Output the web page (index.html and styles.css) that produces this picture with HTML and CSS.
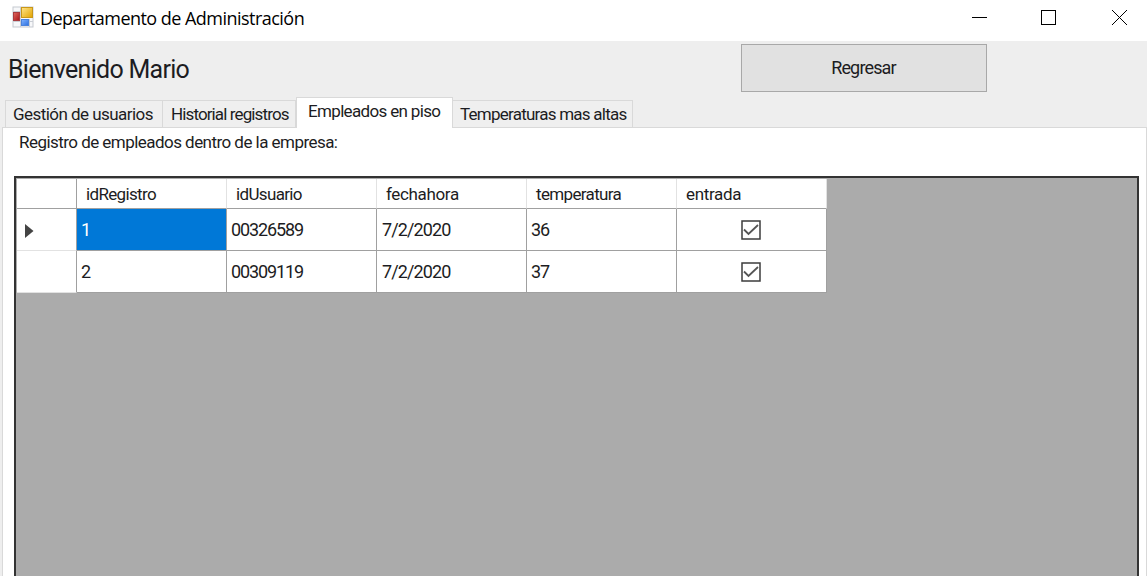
FILE: index.html
```html
<!DOCTYPE html>
<html lang="es">
<head>
<meta charset="utf-8">
<title>Departamento de Administración</title>
<link rel="stylesheet" href="styles.css">
</head>
<body>
<div class="window">
  <header class="titlebar">
    <svg class="app-icon" width="22" height="22" viewBox="0 0 22 22">
      <defs>
        <linearGradient id="gold" x1="0" y1="0" x2="1" y2="1"><stop offset="0" stop-color="#ffe58a"/><stop offset="1" stop-color="#e2a300"/></linearGradient>
        <linearGradient id="red" x1="0" y1="0" x2="1" y2="1"><stop offset="0" stop-color="#e06a60"/><stop offset="1" stop-color="#a8151a"/></linearGradient>
        <linearGradient id="blue" x1="0" y1="0" x2="1" y2="1"><stop offset="0" stop-color="#82b4ff"/><stop offset="1" stop-color="#2b6fe0"/></linearGradient>
      </defs>
      <rect x="1" y="1" width="20" height="20" fill="#f7f8fa" stroke="#c5c9d0"/>
      <path d="M8.500 1v20M1 5.500h8M1 15.500h20M17.500 13v8" stroke="#c9cdd4" fill="none"/>
      <rect x="9.500" y="1.500" width="11" height="10" fill="url(#gold)" stroke="#c99718"/>
      <rect x="1.500" y="6.500" width="6" height="8" fill="url(#red)" stroke="#a83c40"/>
      <rect x="9.500" y="13.500" width="7" height="6" fill="url(#blue)" stroke="#4b83dc"/>
    </svg>
    <span class="title">Departamento de Administración</span>
    <svg class="controls" width="170" height="41" viewBox="0 0 170 41" fill="none" stroke="#000" shape-rendering="crispEdges">
      <path d="M-5 17.500h15"/>
      <rect x="64.500" y="10.500" width="14" height="14"/>
      <path d="M135 10l15 15M150 10l-15 15"/>
    </svg>
  </header>
  <div class="top">
    <h1 class="welcome">Bienvenido Mario</h1>
    <button class="back"><span>Regresar</span></button>
  </div>
  <nav class="tabs">
    <div class="tab t1">Gestión de usuarios</div>
    <div class="tab t2">Historial registros</div>
    <div class="tab t3 active">Empleados en piso</div>
    <div class="tab t4">Temperaturas mas altas</div>
  </nav>
  <main class="page">
    <p class="caption">Registro de empleados dentro de la empresa:</p>
    <section class="viewer">
      <div class="grid">
        <div class="rh"></div><div class="th">idRegistro</div><div class="th">idUsuario</div><div class="th wide">fechahora</div><div class="th">temperatura</div><div class="th wide">entrada</div>
        <div class="rh mark"><svg width="9" height="14" viewBox="0 0 9 14"><path d="M0 0L8.500 7L0 14z" fill="#444"/></svg></div>
        <div class="td selected">1</div><div class="td">00326589</div><div class="td date">7/2/2020</div><div class="td">36</div>
        <div class="td check"><svg width="20" height="20" viewBox="0 0 20 20" fill="none"><rect x="1" y="1" width="18" height="18" stroke="#3c3c3c" stroke-width="1.500"/><path d="M3 9.500L7.500 14L17 5" stroke="#555" stroke-width="1.800"/></svg></div>
        <div class="rh"></div>
        <div class="td">2</div><div class="td">00309119</div><div class="td date">7/2/2020</div><div class="td">37</div>
        <div class="td check"><svg width="20" height="20" viewBox="0 0 20 20" fill="none"><rect x="1" y="1" width="18" height="18" stroke="#3c3c3c" stroke-width="1.500"/><path d="M3 9.500L7.500 14L17 5" stroke="#555" stroke-width="1.800"/></svg></div>
      </div>
    </section>
  </main>
</div>
</body>
</html>
```
FILE: styles.css
```css
* { box-sizing: border-box; }
body { margin: 0; overflow: hidden; }
.window {
  width: 1147px; height: 576px; overflow: hidden;
  display: flex; flex-direction: column;
  background: #eee; color: #1c1c22;
  font: 18px/20px Roboto, "Liberation Sans", sans-serif;
  white-space: nowrap;
}
.titlebar { height: 41px; flex: none; display: flex; background: #fff; padding-left: 12px; }
.app-icon { margin-top: 6px; }
.title { margin: 6px 0 0 6px; font: 18px/24px "Open Sans", "Noto Sans", sans-serif; color: #000; letter-spacing: -0.53px; }
.controls { margin-left: auto; overflow: visible; }
.top { height: 56px; flex: none; display: flex; justify-content: space-between; padding: 3px 160px 0 8px; }
.welcome { margin: 11px 0 0; font-size: 25px; line-height: 30px; font-weight: 400; letter-spacing: -0.72px; }
.back { width: 246px; height: 48px; margin: 0; padding: 0 1px 0 0; font: inherit; color: inherit; background: #e1e1e1; border: 1px solid #a8a8a8; letter-spacing: -0.85px; }
.tabs { height: 30px; flex: none; display: flex; align-items: flex-end; padding-left: 5px; position: relative; font-size: 17px; }
.tab { height: 27px; padding: 3px 0 0 7px; border: 1px solid #d9d9d9; border-bottom: 0; background: #efefef; }
.t1 { width: 158px; letter-spacing: -0.55px; }
.t2 { width: 133px; border-left: 0; padding-left: 8px; letter-spacing: -0.88px; }
.t4 { width: 180px; border-left: 0; padding-left: 7px; letter-spacing: -0.76px; }
.tab.active { width: 157px; height: 31px; margin-bottom: -1px; padding: 3px 0 0 11px; background: #fff; letter-spacing: -0.66px; }
.page { flex: 1; display: flex; flex-direction: column; margin-left: 2px; border: 1px solid #d9d9d9; border-bottom: 0; background: #fff; padding: 4px 7px 0 11px; }
.caption { margin: 0 0 0 5px; height: 44px; font-size: 17px; letter-spacing: -0.54px; }
.viewer { flex: 1; border: 2px solid #333; border-bottom: 0; background: #ababab; padding: 1px 0 0 1px; }
.grid { display: grid; width: 810px; grid-template-columns: 60px repeat(5, 150px); grid-template-rows: 30px 42px 42px; }
.rh { background: #fff; border-right: 1px solid #a0a0a0; border-bottom: 1px solid #e2e2e2; }
.grid > .rh:first-child { border-bottom-color: #a0a0a0; }
.th { background: #fff; border-right: 1px solid #e2e2e2; border-bottom: 1px solid #a0a0a0; padding: 5px 0 0 9px; font-size: 17px; letter-spacing: -0.65px; }
.th.wide { letter-spacing: -0.35px; }
.td { background: #fff; border-right: 1px solid #a0a0a0; border-bottom: 1px solid #a0a0a0; padding: 11px 0 0 4px; letter-spacing: -1.1px; }
.date { padding-left: 5px; letter-spacing: -0.9px; }
.selected { background: #0078d7; color: #fff; }
.mark { padding: 15px 0 0 8px; }
.mark svg, .check svg { display: block; }
.check { padding: 11px 0 0 64px; }
```
